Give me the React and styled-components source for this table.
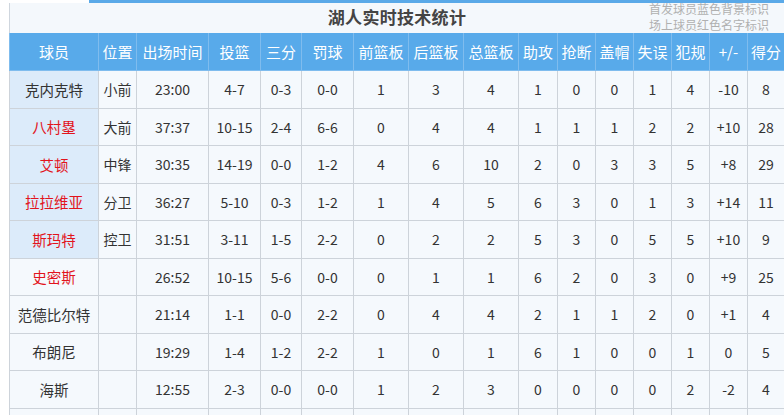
import styled, { createGlobalStyle } from "styled-components";

const GlobalStyle = createGlobalStyle`
  html, body {
    margin: 0;
    padding: 0;
    background: #fff;
    font-family: "Noto Sans CJK SC", "Noto Sans", sans-serif;
  }
`;

const columns = [
  { title: "球员", width: 89 },
  { title: "位置", width: 38 },
  { title: "出场时间", width: 72 },
  { title: "投篮", width: 52 },
  { title: "三分", width: 41 },
  { title: "罚球", width: 52 },
  { title: "前篮板", width: 55 },
  { title: "后篮板", width: 55 },
  { title: "总篮板", width: 55 },
  { title: "助攻", width: 39 },
  { title: "抢断", width: 38 },
  { title: "盖帽", width: 38 },
  { title: "失误", width: 38 },
  { title: "犯规", width: 38 },
  { title: "+/-", width: 38 },
  { title: "得分", width: 37 },
];

const players = [
  { name: "克内克特", pos: "小前", starter: true, onCourt: false, stats: ["23:00", "4-7", "0-3", "0-0", 1, 3, 4, 1, 0, 0, 1, 4, "-10", 8] },
  { name: "八村塁", pos: "大前", starter: true, onCourt: true, stats: ["37:37", "10-15", "2-4", "6-6", 0, 4, 4, 1, 1, 1, 2, 2, "+10", 28] },
  { name: "艾顿", pos: "中锋", starter: true, onCourt: true, stats: ["30:35", "14-19", "0-0", "1-2", 4, 6, 10, 2, 0, 3, 3, 5, "+8", 29] },
  { name: "拉拉维亚", pos: "分卫", starter: true, onCourt: true, stats: ["36:27", "5-10", "0-3", "1-2", 1, 4, 5, 6, 3, 0, 1, 3, "+14", 11] },
  { name: "斯玛特", pos: "控卫", starter: true, onCourt: true, stats: ["31:51", "3-11", "1-5", "2-2", 0, 2, 2, 5, 3, 0, 5, 5, "+10", 9] },
  { name: "史密斯", pos: "", starter: false, onCourt: true, stats: ["26:52", "10-15", "5-6", "0-0", 0, 1, 1, 6, 2, 0, 3, 0, "+9", 25] },
  { name: "范德比尔特", pos: "", starter: false, onCourt: false, stats: ["21:14", "1-1", "0-0", "2-2", 0, 4, 4, 2, 1, 1, 2, 0, "+1", 4] },
  { name: "布朗尼", pos: "", starter: false, onCourt: false, stats: ["19:29", "1-4", "1-2", "2-2", 1, 0, 1, 6, 1, 0, 0, 1, "0", 5] },
  { name: "海斯", pos: "", starter: false, onCourt: false, stats: ["12:55", "2-3", "0-0", "0-0", 1, 2, 3, 0, 0, 0, 0, 2, "-2", 4] },
  { name: "", pos: "", starter: false, onCourt: false, stats: Array(14).fill("") },
];

const Page = styled.div`
  padding-left: 9px;
  width: 775px;
`;

const TabStrip = styled.div`
  display: flex;
  height: 3px;
`;

const ActiveTab = styled.div`
  width: 80px;
  background: #fff;
`;

const TabFill = styled.div`
  flex: 1;
  background: #5aa9e8;
`;

const TitleBar = styled.div`
  position: relative;
  height: 30px;
  box-sizing: border-box;
  padding-bottom: 4px;
  display: flex;
  align-items: center;
  justify-content: center;
  background: #f4f8fc;
  border-left: 1px solid #cfd6de;
`;

const Title = styled.h2`
  margin: 0;
  font-size: 17px;
  font-weight: 700;
  color: #444;
  letter-spacing: 0.3px;
`;

const Legend = styled.div`
  position: absolute;
  right: 15px;
  top: -2px;
  display: flex;
  flex-direction: column;
  font-size: 12px;
  line-height: 16px;
  color: #b0b0b0;
`;

const Table = styled.table`
  border-collapse: collapse;
  table-layout: fixed;
  width: 775px;
  font-size: 14px;
  color: #333;
`;

const HeadCell = styled.th`
  height: 37px;
  padding: 0;
  background: #58aaea;
  color: #fff;
  font-weight: 400;
  font-size: 15px;
  text-align: center;
  border: 1px solid #7fbcee;
  border-top: none;
  white-space: nowrap;
`;

const Row = styled.tr`
  height: 37.5px;
`;

const Cell = styled.td`
  padding: 0;
  text-align: center;
  background: #f5f9fd;
  border: 1px solid #cdd3da;
  white-space: nowrap;
`;

const NameCell = styled(Cell)`
  font-size: 14.5px;
  background: ${(p) => (p.$starter ? "#dcebfa" : "#f5f9fd")};
  color: ${(p) => (p.$onCourt ? "#e2141c" : "#333")};
`;

export default function App() {
  return (
    <Page>
      <GlobalStyle />
      <TabStrip>
        <ActiveTab />
        <TabFill />
      </TabStrip>
      <TitleBar>
        <Title>湖人实时技术统计</Title>
        <Legend>
          <span>首发球员蓝色背景标识</span>
          <span>场上球员红色名字标识</span>
        </Legend>
      </TitleBar>
      <Table>
        <colgroup>
          {columns.map((c) => (
            <col key={c.title} style={{ width: c.width }} />
          ))}
        </colgroup>
        <thead>
          <tr>
            {columns.map((c) => (
              <HeadCell key={c.title}>{c.title}</HeadCell>
            ))}
          </tr>
        </thead>
        <tbody>
          {players.map((p, r) => (
            <Row key={r}>
              <NameCell $starter={p.starter} $onCourt={p.onCourt}>
                {p.name}
              </NameCell>
              <Cell>{p.pos}</Cell>
              {p.stats.map((s, i) => (
                <Cell key={i}>{s}</Cell>
              ))}
            </Row>
          ))}
        </tbody>
      </Table>
    </Page>
  );
}
